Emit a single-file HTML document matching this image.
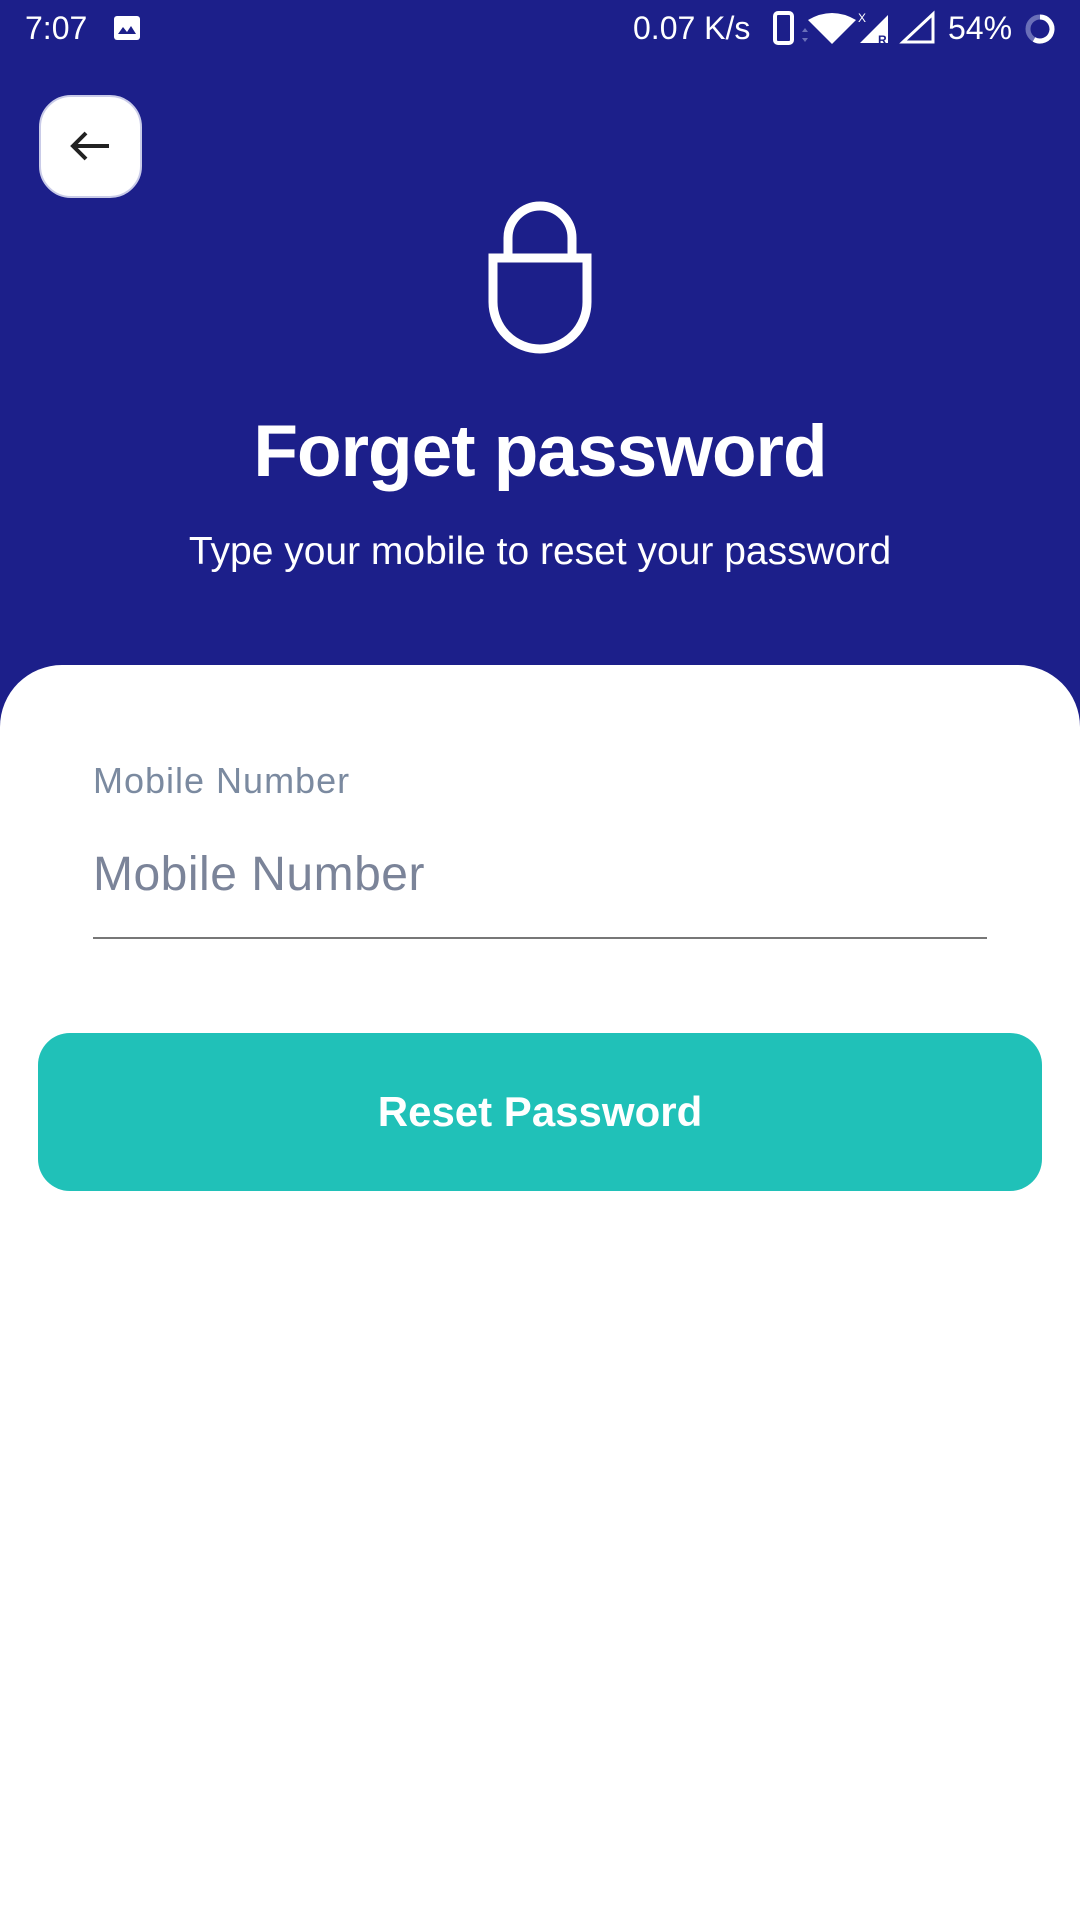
<!DOCTYPE html>
<html><head><meta charset="utf-8">
<style>
*{margin:0;padding:0;box-sizing:border-box}
html,body{width:1080px;height:1920px;overflow:hidden;background:#fff;font-family:"Liberation Sans","DejaVu Sans",sans-serif}
.top{position:absolute;left:0;top:0;width:1080px;height:740px;background:#1c1f8a}
.sb{position:absolute;top:8px;color:#fff;font-size:32px;line-height:40px}
.back{position:absolute;left:39px;top:95px;width:103px;height:103px;background:#fff;border-radius:32px;border:2px solid #c9cbe8}
.title{position:absolute;left:0;width:1080px;top:410px;text-align:center;color:#fff;font-size:73px;font-weight:bold;letter-spacing:-1px}
.sub{position:absolute;left:0;width:1080px;top:530px;text-align:center;color:#fff;font-size:39px}
.sheet{position:absolute;left:0;top:665px;width:1080px;height:1255px;background:#fff;border-radius:62px 62px 0 0}
.label{position:absolute;left:93px;top:760px;color:#7b8aa0;font-size:36px;letter-spacing:1px}
.ph{position:absolute;left:93px;top:847px;color:#7b8499;font-size:48px;letter-spacing:0.5px}
.line{position:absolute;left:93px;top:937px;width:894px;height:2px;background:#777}
.btn{position:absolute;left:38px;top:1033px;width:1004px;height:158px;background:#20c1b8;border-radius:32px;color:#fff;font-size:42px;font-weight:bold;text-align:center;line-height:158px}
</style></head><body>
<div class="top"></div>
<div class="sb" style="left:25px">7:07</div>
<svg style="position:absolute;left:113px;top:15px" width="28" height="26" viewBox="0 0 28 26"><rect x="1" y="1" width="26" height="24" rx="3" fill="#fff"/><path d="M5 19 L10 12 L14 17 L18 11 L23 19Z" fill="#1c1f8a"/></svg>
<div class="sb" style="left:633px">0.07 K/s</div>
<svg style="position:absolute;left:770px;top:10px" width="290" height="40" viewBox="0 0 290 40">
<rect x="5" y="3" width="17" height="30" rx="3" fill="none" stroke="#fff" stroke-width="4"/>
<path d="M38 10 Q62 -4 86 10 L62 34Z" fill="#fff"/>
<path d="M32 22 l3 -4 l3 4z M32 28 l3 4 l3 -4z" fill="#6a6fb8"/>
<text x="88" y="12" fill="#fff" font-size="12" font-family="Liberation Sans">X</text>
<path d="M90 33 L118 5 L118 33Z" fill="#fff"/>
<text x="108" y="34" fill="#1c1f8a" font-size="12" font-weight="bold" font-family="Liberation Sans">R</text>
<path d="M133 32 L163 4 L163 32Z" fill="none" stroke="#fff" stroke-width="3"/>
<circle cx="270" cy="19" r="12" fill="none" stroke="#6a6fb8" stroke-width="5"/>
<path d="M270 7 A12 12 0 1 1 264 29.4" fill="none" stroke="#fff" stroke-width="5"/>
</svg>
<div class="sb" style="left:948px">54%</div>
<div class="back"><svg width="99" height="99" viewBox="0 0 99 99"><path d="M32 49 H68 M45 36 L32 49 L45 62" fill="none" stroke="#222" stroke-width="4"/></svg></div>
<svg style="position:absolute;left:484px;top:196px" width="112" height="160" viewBox="0 0 112 160">
<path d="M24 66 V42 A32 32 0 0 1 88 42 V66" fill="none" stroke="#fff" stroke-width="9"/>
<path d="M9 62 H103 V106 A47 47 0 0 1 9 106 Z" fill="none" stroke="#fff" stroke-width="9"/>
</svg>
<div class="title">Forget password</div>
<div class="sub">Type your mobile to reset your password</div>
<div class="sheet"></div>
<div class="label">Mobile Number</div>
<div class="ph">Mobile Number</div>
<div class="line"></div>
<div class="btn">Reset Password</div>
</body></html>
